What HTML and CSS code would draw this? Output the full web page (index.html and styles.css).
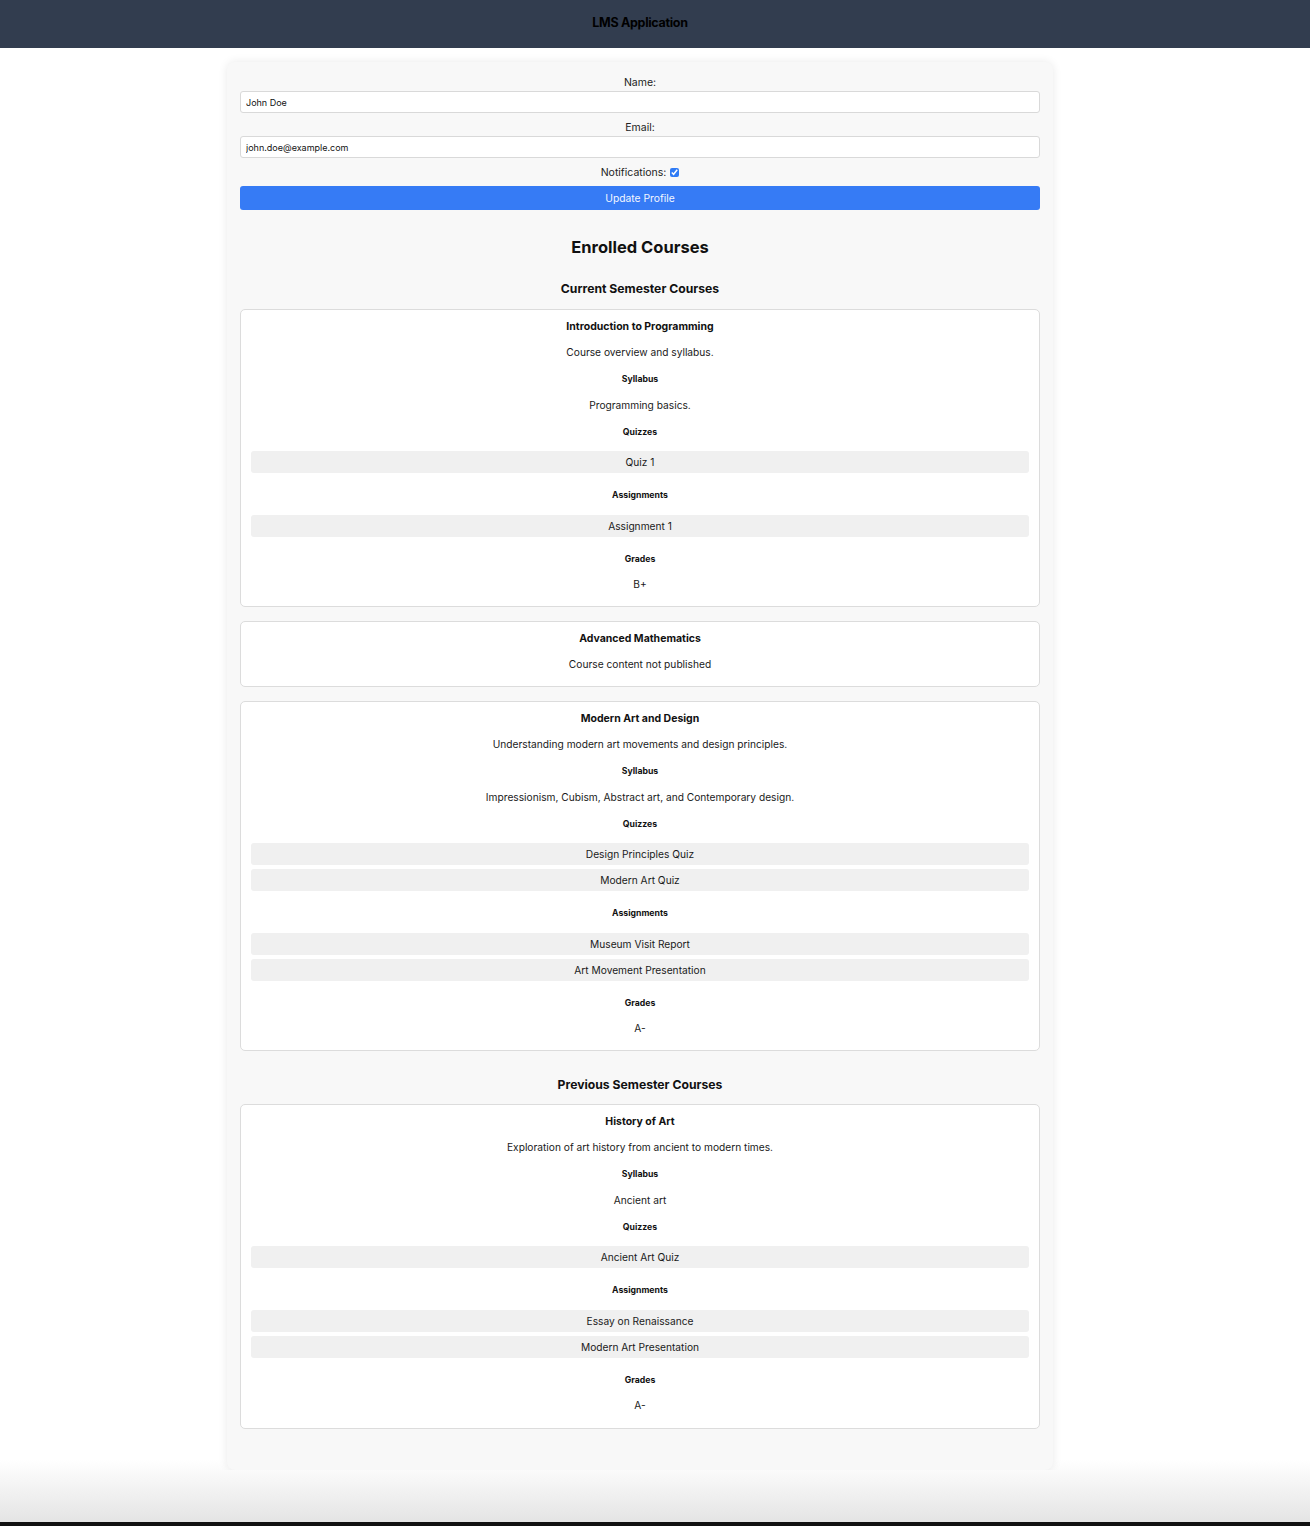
FILE: index.html
```html
<!DOCTYPE html>
<html lang="en">
<head>
<meta charset="utf-8">
<title>LMS Application</title>
<link rel="stylesheet" href="styles.css">
</head>
<body>
<header class="app-header">
  <h1 class="app-title">LMS Application</h1>
</header>
<main class="main">
  <div class="panel">
    <form class="profile">
      <label class="field-label" for="name">Name:</label>
      <input class="text-input" id="name" type="text" value="John Doe">
      <label class="field-label" for="email">Email:</label>
      <input class="text-input" id="email" type="email" value="john.doe@example.com">
      <label class="field-label notif">Notifications: <input class="check" type="checkbox" checked></label>
      <button class="btn" type="button">Update Profile</button>
    </form>

    <h2 class="page-heading">Enrolled Courses</h2>

    <h3 class="semester">Current Semester Courses</h3>

    <section class="card">
      <h4 class="course-title">Introduction to Programming</h4>
      <p class="text">Course overview and syllabus.</p>
      <h5 class="sub">Syllabus</h5>
      <p class="text">Programming basics.</p>
      <h5 class="sub">Quizzes</h5>
      <ul class="items"><li class="item">Quiz 1</li></ul>
      <h5 class="sub">Assignments</h5>
      <ul class="items"><li class="item">Assignment 1</li></ul>
      <h5 class="sub">Grades</h5>
      <p class="text">B+</p>
    </section>

    <section class="card">
      <h4 class="course-title">Advanced Mathematics</h4>
      <p class="text">Course content not published</p>
    </section>

    <section class="card">
      <h4 class="course-title">Modern Art and Design</h4>
      <p class="text">Understanding modern art movements and design principles.</p>
      <h5 class="sub">Syllabus</h5>
      <p class="text">Impressionism, Cubism, Abstract art, and Contemporary design.</p>
      <h5 class="sub">Quizzes</h5>
      <ul class="items">
        <li class="item">Design Principles Quiz</li>
        <li class="item">Modern Art Quiz</li>
      </ul>
      <h5 class="sub">Assignments</h5>
      <ul class="items">
        <li class="item">Museum Visit Report</li>
        <li class="item">Art Movement Presentation</li>
      </ul>
      <h5 class="sub">Grades</h5>
      <p class="text">A-</p>
    </section>

    <h3 class="semester prev">Previous Semester Courses</h3>

    <section class="card">
      <h4 class="course-title">History of Art</h4>
      <p class="text">Exploration of art history from ancient to modern times.</p>
      <h5 class="sub">Syllabus</h5>
      <p class="text">Ancient art</p>
      <h5 class="sub">Quizzes</h5>
      <ul class="items"><li class="item">Ancient Art Quiz</li></ul>
      <h5 class="sub">Assignments</h5>
      <ul class="items">
        <li class="item">Essay on Renaissance</li>
        <li class="item">Modern Art Presentation</li>
      </ul>
      <h5 class="sub">Grades</h5>
      <p class="text">A-</p>
    </section>
  </div>
</main>
</body>
</html>
```

FILE: styles.css
```css
html {
  min-height: 100%;
  background: linear-gradient(to bottom, #ffffff 0, #ffffff calc(100% - 66px), #e4e4e4 calc(100% - 4px), #111111 calc(100% - 4px), #111111 100%);
}

body {
  margin: 0;
  font-family: Inter, "Noto Sans", sans-serif;
  color: #1a1a1a;
}

.app-header {
  background: #323d4f;
  height: 48px;
  padding-right: 30px;
  display: flex;
  align-items: center;
  justify-content: center;
}

.app-title {
  margin: 0 0 4px;
  font-size: 12.5px;
  font-weight: 700;
  color: #000;
  letter-spacing: -0.3px;
}

.main {
  padding: 14px 30px 0 0;
  display: flex;
  justify-content: center;
}

.panel {
  width: 800px;
  padding: 13px 13px 41px;
  background: #f8f8f8;
  border-radius: 8px;
  box-shadow: 0 0 10px rgba(0, 0, 0, 0.09);
  text-align: center;
}

.profile {
  display: flex;
  flex-direction: column;
}

.field-label {
  font-size: 10.5px;
  line-height: 15px;
  color: #222;
  margin-bottom: 1px;
}

.notif {
  margin-bottom: 6px;
}

.text-input {
  height: 22px;
  box-sizing: border-box;
  border: 1px solid #d9d9d9;
  border-radius: 3px;
  padding: 0 5px;
  font-family: Inter, "Noto Sans", sans-serif;
  font-size: 9px;
  color: #111;
  background: #fff;
  margin: 0 0 7px;
}

.check {
  width: 9px;
  height: 9px;
  margin: 0 0 0 1px;
  vertical-align: -0.5px;
  accent-color: #2f7bf5;
}

.btn {
  height: 24px;
  border: none;
  border-radius: 3px;
  background: #367bf5;
  color: #f2f6ff;
  font-family: Inter, "Noto Sans", sans-serif;
  font-size: 10.3px;
  padding: 0;
}

.page-heading {
  margin: 27px 0 0;
  font-size: 16.5px;
  line-height: 20px;
  font-weight: 700;
  color: #111;
}

.semester {
  margin: 23.5px 0 13.5px;
  font-size: 12.2px;
  line-height: 15px;
  font-weight: 700;
  color: #111;
}

.semester.prev {
  margin-top: 25.5px;
  margin-bottom: 12.5px;
}

.card {
  background: #fff;
  border: 1px solid #dcdcdc;
  border-radius: 5px;
  padding: 10px 10px 14px;
  margin-bottom: 14px;
}

.card:last-child {
  margin-bottom: 0;
  padding-bottom: 15px;
}

.course-title {
  margin: 0;
  font-size: 10.5px;
  line-height: 14px;
  font-weight: 700;
  color: #111;
}

.text {
  margin: 11px 0 0;
  font-size: 10.2px;
  line-height: 15px;
  color: #1a1a1a;
}

.sub + .text {
  margin-top: 0;
}

.sub {
  margin: 13px 0 12.5px;
  font-size: 8.7px;
  line-height: 12px;
  font-weight: 700;
  color: #111;
}

.items {
  list-style: none;
  margin: 13.5px 0 16px;
  padding: 0;
  display: flex;
  flex-direction: column;
  gap: 4px;
}

.item {
  height: 22px;
  line-height: 22px;
  background: #f0f0f0;
  border-radius: 3px;
  font-size: 10.2px;
  color: #1a1a1a;
}
```
